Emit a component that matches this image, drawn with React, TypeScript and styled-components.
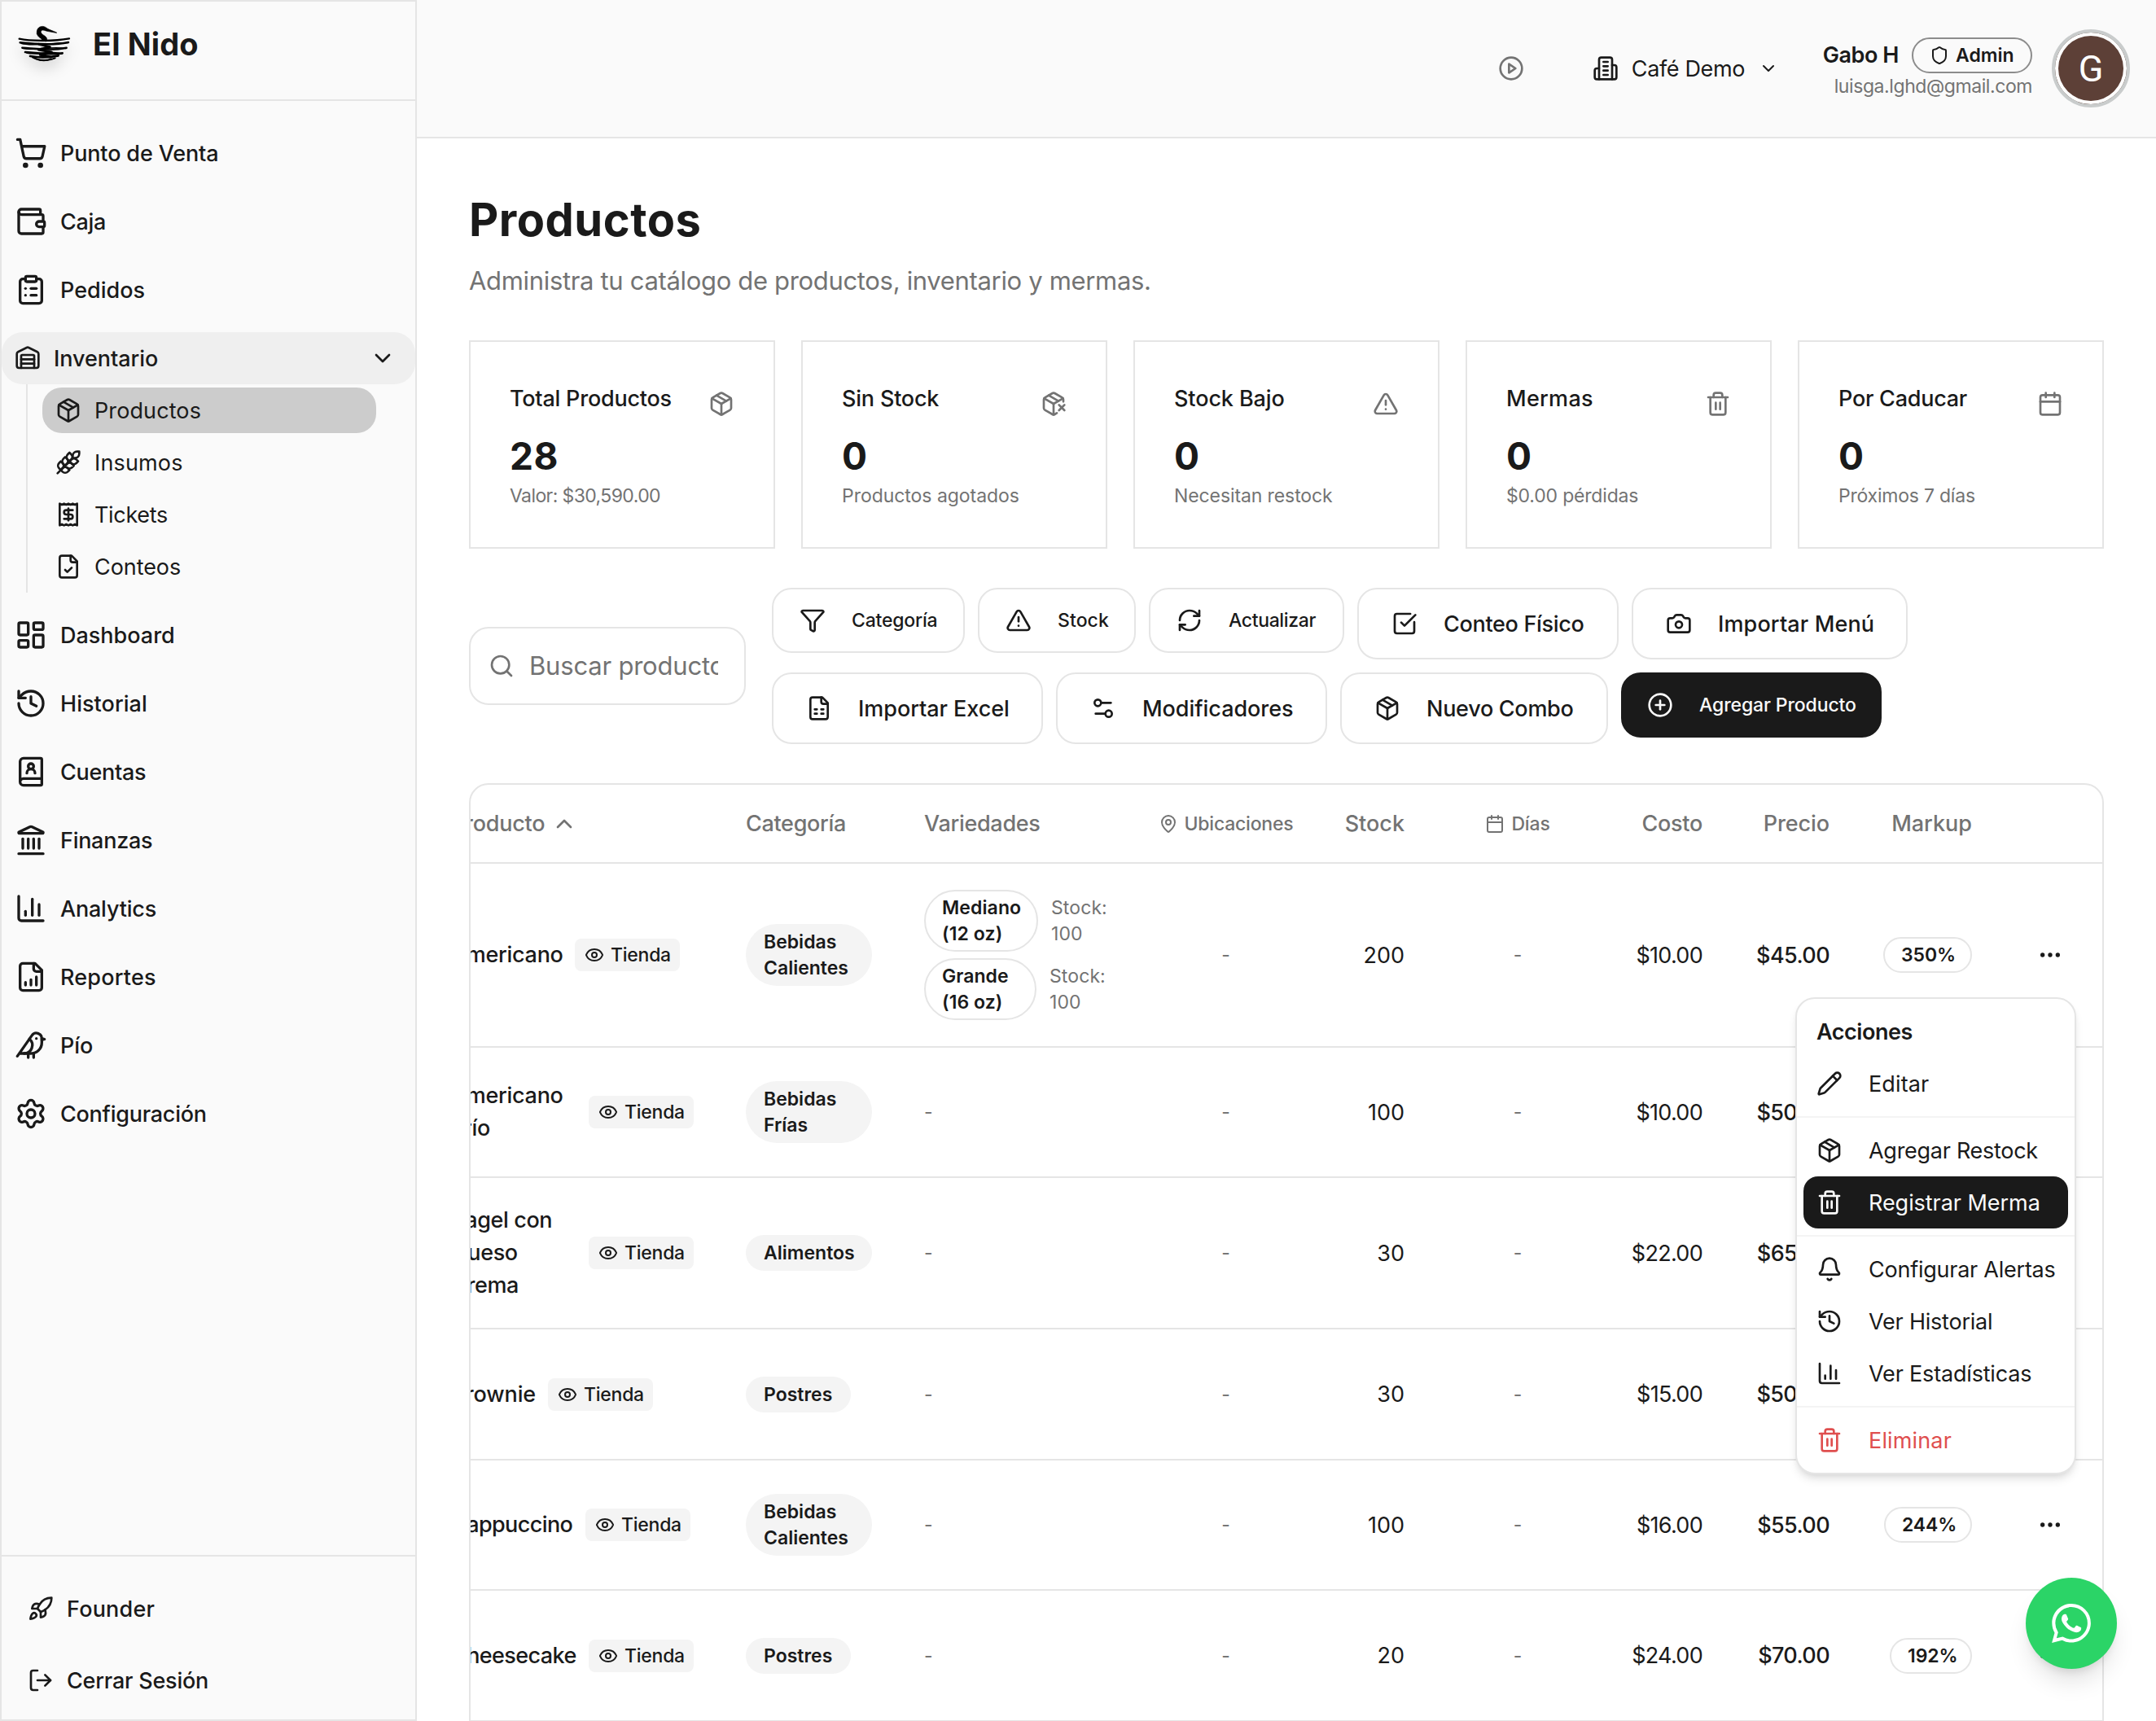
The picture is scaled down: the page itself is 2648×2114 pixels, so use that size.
import React from "react";
import styled, { createGlobalStyle, css } from "styled-components";
import {
  Bell, Bird, BookUser, Calendar, Camera, ChartColumn, ChevronDown, ChevronUp, CirclePlus, ClipboardList,
  Ellipsis, Eye, Funnel, History, Landmark, LayoutDashboard, LogOut, MapPin, Package, PackageX, Pencil,
  Receipt, RefreshCw, Rocket, Search, Settings, Settings2, Shield, ShoppingCart, SquareCheckBig, Trash2,
  TriangleAlert, Wallet, Warehouse, Wheat,
} from "lucide-react";
import { SiWhatsapp } from "react-icons/si";

const color = {
  text: "#1a1a1a",
  muted: "#737373",
  border: "#e5e5e5",
  panel: "#fafafa",
  soft: "#f4f4f4",
  danger: "#df4f4f",
};

const GlobalStyle = createGlobalStyle`
  *, *::before, *::after { box-sizing: border-box; }
  body {
    margin: 0;
    background: #fff;
    color: ${color.text};
    font-family: Inter, "Liberation Sans", sans-serif;
    font-size: 27px;
    font-kerning: normal;
  }
  svg { flex: none; display: block; }
`;

/* ---------- icons ---------- */

type IconProps = { size?: number };

const Outline = ({ size = 24, children }: IconProps & { children: React.ReactNode }) => (
  <svg width={size} height={size} viewBox="0 0 24 24" fill="none" stroke="currentColor" strokeWidth={2}
    strokeLinecap="round" strokeLinejoin="round">{children}</svg>
);

const FileSheet = ({ size, marks }: IconProps & { marks: string }) => (
  <Outline size={size}>
    <path d="M15 2H6a2 2 0 0 0-2 2v16a2 2 0 0 0 2 2h12a2 2 0 0 0 2-2V7Z" />
    <path d="M14 2v4a2 2 0 0 0 2 2h4" />
    <path d={marks} />
  </Outline>
);
const FileCheck = (p: IconProps) => <FileSheet {...p} marks="m9 15 2 2 4-4" />;
const FileChart = (p: IconProps) => <FileSheet {...p} marks="M8 18v-2M12 18v-4M16 18v-6" />;
const FileTable = (p: IconProps) => <FileSheet {...p} marks="M8 13h2M14 13h2M8 17h2M14 17h2" />;

const Building = (p: IconProps) => (
  <Outline {...p}>
    <path d="M6 22V4a2 2 0 0 1 2-2h8a2 2 0 0 1 2 2v18Z" />
    <path d="M6 12H4a2 2 0 0 0-2 2v6a2 2 0 0 0 2 2h2" />
    <path d="M18 9h2a2 2 0 0 1 2 2v9a2 2 0 0 1-2 2h-2" />
    <path d="M10 6h4M10 10h4M10 14h4M10 18h4" />
  </Outline>
);

const PlayCircle = (p: IconProps) => (
  <Outline {...p}>
    <circle cx="12" cy="12" r="10" />
    <polygon points="10 8 16 12 10 16 10 8" />
  </Outline>
);

const NestLogo = styled(({ className }: { className?: string }) => (
  <svg className={className} width="66" height="46" viewBox="61 97 198 138" fill="none" stroke="#000" strokeLinecap="round">
    <path d="M134 128C131 108 146 98 160 102C168 104 172 110 180 113L207 124C207 125 206 126 204 125L172 119C163 117 158 113 152 116C144 122 152 130 161 135C171 141 174 150 168 157L150 152C160 148 136 143 134 128Z"
      fill="#000" strokeWidth="2" />
    <path d="M69 147C110 156 200 156 253 146" strokeWidth="7" />
    <path d="M72 161C110 165 190 173 250 160" strokeWidth="7.5" />
    <path d="M76 164C120 177 190 160 248 162" strokeWidth="4" />
    <path d="M80 180C120 182 180 193 243 180" strokeWidth="7.5" />
    <path d="M84 183C130 192 190 172 241 183" strokeWidth="4" />
    <path d="M91 196C130 199 180 208 228 200" strokeWidth="8" />
    <path d="M96 199C140 210 190 186 226 202" strokeWidth="4" />
    <path d="M109 211C140 216 180 216 213 209" strokeWidth="8" />
    <path d="M118 215C140 228 176 230 201 218" strokeWidth="6" />
    <path d="M132 221C150 230 170 229 188 221" strokeWidth="5" />
    <path d="M142 167L182 177L140 187L188 196L146 206L184 214" strokeWidth="9" strokeLinejoin="round" />
  </svg>
))`
  filter: drop-shadow(0 10px 8px rgba(0, 0, 0, 0.14));
`;

/* ---------- text ---------- */

const Text = styled.span<{ $track?: number; $size?: number; $weight?: number; $muted?: boolean }>`
  letter-spacing: ${(p) => p.$track ?? -0.15}px;
  font-size: ${(p) => p.$size ?? 27}px;
  font-weight: ${(p) => p.$weight ?? 500};
  white-space: nowrap;
  ${(p) => p.$muted && css`color: ${color.muted};`}
`;

/* ---------- shell ---------- */

const Page = styled.div`
  position: relative;
  display: flex;
  width: 2648px;
  height: 2114px;
  overflow: hidden;
`;

const Sidebar = styled.aside`
  display: flex;
  flex-direction: column;
  width: 512px;
  height: 2114px;
  flex: none;
  background: ${color.panel};
  border: 2px solid ${color.border};
`;

const Brand = styled.div`
  display: flex;
  align-items: center;
  gap: 27px;
  height: 122px;
  padding: 0 18px 16px 19px;
  border-bottom: 2px solid ${color.border};
`;

const Nav = styled.nav`
  display: flex;
  flex-direction: column;
  flex: 1;
  gap: 20px;
  padding-top: 32px;
`;

const NavItem = styled.a`
  display: flex;
  align-items: center;
  gap: 16px;
  height: 64px;
  padding-left: 16px;
`;

const NavGroupHead = styled(NavItem)`
  background: #efefef;
  border-radius: 26px;
  padding-right: 24px;
  & > svg:last-child { margin-left: auto; }
`;

const SubList = styled.div`
  display: flex;
  flex-direction: column;
  gap: 8px;
  margin-left: 30px;
  padding: 4px 48px 4px 18px;
  border-left: 2px solid ${color.border};
`;

const SubItem = styled.a<{ $active?: boolean }>`
  display: flex;
  align-items: center;
  gap: 16px;
  height: 56px;
  padding-left: 16px;
  border-radius: 24px;
  background: ${(p) => (p.$active ? "#cccccc" : "transparent")};
`;

const SideFooter = styled.div`
  display: flex;
  flex-direction: column;
  gap: 24px;
  padding: 32px 0 16px 16px;
  border-top: 2px solid ${color.border};
`;

const Column = styled.div`
  display: flex;
  flex-direction: column;
  flex: 1;
  min-width: 0;
`;

const TopBar = styled.header`
  display: flex;
  align-items: center;
  justify-content: flex-end;
  height: 170px;
  flex: none;
  padding-right: 32px;
  background: ${color.panel};
  border-bottom: 2px solid ${color.border};
`;

const TourButton = styled.span`
  color: ${color.muted};
  margin-right: 84px;
`;

const Tenant = styled.div`
  display: flex;
  align-items: center;
  gap: 16px;
  width: 228px;
  margin-right: 55px;
  & > svg:last-child { margin-left: auto; }
`;

const UserBlock = styled.div`
  display: flex;
  flex-direction: column;
  align-items: flex-end;
  margin-right: 24px;
  padding-bottom: 1px;
`;

const UserRow = styled.div`
  display: flex;
  align-items: center;
  gap: 16px;
`;

const RoleBadge = styled.span`
  display: flex;
  align-items: center;
  gap: 8px;
  width: 148px;
  height: 44px;
  padding-left: 20px;
  border: 2px solid #8c8c8c;
  border-radius: 22px;
`;

const Email = styled(Text)`
  line-height: 32px;
`;

const Avatar = styled.div`
  display: flex;
  align-items: center;
  justify-content: center;
  width: 96px;
  height: 96px;
  border-radius: 50%;
  border: 4px solid #c9cccc;
  background: #5d4037;
  box-shadow: inset 0 0 0 4px #fff;
  color: #fff;
  font-family: Roboto, sans-serif;
  font-size: 45px;
`;

const Main = styled.main`
  display: flex;
  flex-direction: column;
  padding: 68px 64px 0;
`;

const Title = styled.h1`
  margin: 0;
  font-size: 56px;
  line-height: 64px;
  font-weight: 700;
  letter-spacing: 0.5px;
`;

const Subtitle = styled.p`
  margin: 27px 0 0;
  font-size: 31px;
  line-height: 32px;
  letter-spacing: -0.33px;
  color: ${color.muted};
`;

/* ---------- stat cards ---------- */

const Cards = styled.section`
  display: grid;
  grid-template-columns: repeat(5, 1fr);
  gap: 32px;
  margin-top: 57px;
`;

const Card = styled.article`
  height: 256px;
  padding: 48px;
  border: 2px solid ${color.border};
`;

const CardHead = styled.div`
  display: flex;
  justify-content: space-between;
  align-items: flex-end;
  height: 44px;
  line-height: 44px;
  & > svg { color: ${color.muted}; }
`;

const CardValue = styled.div`
  margin-top: 24px;
  font-size: 46px;
  line-height: 48px;
  font-weight: 700;
  letter-spacing: 0.6px;
`;

const CardNote = styled.div`
  margin-top: 8px;
  line-height: 32px;
`;

/* ---------- toolbar ---------- */

const Toolbar = styled.section`
  display: flex;
  align-items: center;
  gap: 32px;
  margin-top: 48px;
`;

const SearchBox = styled.div`
  display: flex;
  align-items: center;
  gap: 18px;
  width: 340px;
  height: 96px;
  flex: none;
  padding: 0 32px 0 22px;
  border: 2px solid ${color.border};
  border-radius: 24px;
  color: ${color.muted};
`;

const SearchHint = styled(Text)`
  flex: 1;
  min-width: 0;
  overflow: hidden;
  line-height: 44px;
`;

const Actions = styled.div`
  display: flex;
  flex-direction: column;
  gap: 16px;
`;

const ActionRow = styled.div`
  display: flex;
  align-items: flex-start;
  gap: 16px;
`;

const Button = styled.button<{ $w: number; $large?: boolean; $primary?: boolean }>`
  display: flex;
  align-items: center;
  gap: 32px;
  width: ${(p) => p.$w}px;
  height: ${(p) => (p.$large ? 88 : 80)}px;
  padding: 0 0 0 ${(p) => (p.$large ? 40 : p.$primary ? 30 : 32)}px;
  border: 2px solid ${(p) => (p.$primary ? color.text : color.border)};
  border-radius: 24px;
  background: ${(p) => (p.$primary ? color.text : "#fff")};
  color: ${(p) => (p.$primary ? color.panel : color.text)};
  font-family: inherit;
`;

/* ---------- table ---------- */

const TableFrame = styled.section`
  height: 1200px;
  margin-top: 48px;
  overflow: hidden;
  border: 2px solid ${color.border};
  border-radius: 24px;
`;

const TableBody = styled.div`
  width: 2060px;
  margin-left: -56px;
`;

const Row = styled.div<{ $h: number }>`
  display: grid;
  grid-template-columns: 362px 219px 288px 229px 137px 214px 152px 156px 175px 128px;
  height: ${(p) => p.$h}px;
  border-bottom: 2px solid ${color.border};
`;

const Cell = styled.div<{ $align?: "center" | "flex-end" }>`
  display: flex;
  align-items: center;
  justify-content: ${(p) => p.$align ?? "flex-start"};
  padding: 0 32px;
  min-width: 0;
`;

const HeadCell = styled(Cell)`
  gap: 8px;
  color: ${color.muted};
`;

const ProductCell = styled(Cell)`
  gap: 16px;
`;

const ProductName = styled(Text)<{ $w: number }>`
  width: ${(p) => p.$w}px;
  flex: none;
  line-height: 40px;
  white-space: pre-line;
`;

const StoreTag = styled.span`
  display: flex;
  align-items: center;
  gap: 8px;
  width: 129px;
  height: 40px;
  padding-left: 12px;
  border-radius: 8px;
  background: ${color.soft};
`;

const Pill = styled.span<{ $w?: number; $lined?: boolean }>`
  display: flex;
  width: ${(p) => (p.$w ? `${p.$w}px` : "auto")};
  padding: ${(p) => (p.$lined ? "4px 0 4px 20px" : "6px 0 6px 22px")};
  border: ${(p) => (p.$lined ? `2px solid ${color.border}` : "none")};
  border-radius: 38px;
  background: ${(p) => (p.$lined ? "#fff" : color.soft)};
  line-height: 32px;
  & > * { white-space: pre-line; }
`;

const Varieties = styled.div`
  display: flex;
  flex-direction: column;
  gap: 8px;
`;

const Variety = styled.div`
  display: flex;
  align-items: center;
  gap: 16px;
  line-height: 32px;
`;

const StockNote = styled(Text)`
  white-space: pre-line;
`;

/* ---------- row menu ---------- */

const Menu = styled.div`
  position: absolute;
  left: 2205px;
  top: 1225px;
  width: 345px;
  padding: 8px 0;
  border: 2px solid ${color.border};
  border-radius: 24px;
  background: #fff;
  box-shadow: 0 8px 12px -2px rgba(0, 0, 0, 0.1), 0 4px 8px -4px rgba(0, 0, 0, 0.1);
`;

const MenuLabel = styled.div`
  display: flex;
  align-items: center;
  height: 64px;
  padding-left: 24px;
`;

const MenuItem = styled.div<{ $active?: boolean; $danger?: boolean }>`
  display: flex;
  align-items: center;
  gap: 32px;
  height: 64px;
  margin: 0 8px;
  padding-left: 16px;
  border-radius: 18px;
  background: ${(p) => (p.$active ? color.text : "transparent")};
  color: ${(p) => (p.$active ? color.panel : p.$danger ? color.danger : color.text)};
`;

const MenuRule = styled.div`
  height: 2px;
  margin: 8px 0;
  background: ${color.soft};
`;

const ChatButton = styled.a`
  position: absolute;
  left: 2488px;
  top: 1938px;
  display: flex;
  align-items: center;
  justify-content: center;
  width: 112px;
  height: 112px;
  border-radius: 50%;
  background: #2bd467;
  color: #fff;
  box-shadow: 0 20px 30px -6px rgba(0, 0, 0, 0.12), 0 8px 12px -6px rgba(0, 0, 0, 0.12);
`;

/* ---------- data ---------- */

type Icon = React.ComponentType<{ size?: number }>;

const navTop: [Icon, string, number][] = [
  [ShoppingCart, "Punto de Venta", -0.15],
  [Wallet, "Caja", -0.31],
  [ClipboardList, "Pedidos", 0],
];
const navSub: [Icon, string, number][] = [
  [Package, "Productos", 0.1],
  [Wheat, "Insumos", 0.15],
  [Receipt, "Tickets", -0.32],
  [FileCheck, "Conteos", -0.06],
];
const navRest: [Icon, string, number][] = [
  [LayoutDashboard, "Dashboard", 0],
  [History, "Historial", 0.05],
  [BookUser, "Cuentas", -0.3],
  [Landmark, "Finanzas", -0.28],
  [ChartColumn, "Analytics", -0.2],
  [FileChart, "Reportes", 0.19],
  [Bird, "Pío", -0.06],
  [Settings, "Configuración", -0.25],
];

const stats: { title: string; track: number; value: string; note: string; noteTrack: number; icon: Icon }[] = [
  { title: "Total Productos", track: -0.23, value: "28", note: "Valor: $30,590.00", noteTrack: -0.6, icon: Package },
  { title: "Sin Stock", track: -0.2, value: "0", note: "Productos agotados", noteTrack: -0.04, icon: PackageX },
  { title: "Stock Bajo", track: -0.1, value: "0", note: "Necesitan restock", noteTrack: -0.1, icon: TriangleAlert },
  { title: "Mermas", track: 0.28, value: "0", note: "$0.00 pérdidas", noteTrack: -0.18, icon: Trash2 },
  { title: "Por Caducar", track: -0.25, value: "0", note: "Próximos 7 días", noteTrack: -0.22, icon: Calendar },
];

type Action = { label: string; icon: Icon; w: number; track: number; large?: boolean; primary?: boolean };
const actionRows: Action[][] = [
  [
    { label: "Categoría", icon: Funnel, w: 237, track: -0.2 },
    { label: "Stock", icon: TriangleAlert, w: 194, track: 0.09 },
    { label: "Actualizar", icon: RefreshCw, w: 240, track: -0.36 },
    { label: "Conteo Físico", icon: SquareCheckBig, w: 321, track: -0.32, large: true },
    { label: "Importar Menú", icon: Camera, w: 339, track: 0.13, large: true },
  ],
  [
    { label: "Importar Excel", icon: FileTable, w: 333, track: -0.05, large: true },
    { label: "Modificadores", icon: Settings2, w: 333, track: -0.04, large: true },
    { label: "Nuevo Combo", icon: Package, w: 329, track: -0.28, large: true },
    { label: "Agregar Producto", icon: CirclePlus, w: 320, track: -0.11, primary: true },
  ],
];

type Product = {
  h: number; name: string; nameW: number; track: number; category: string; catW: number;
  varieties?: [string, number, number][]; stock: string; cost: string; price: string;
  markup: string; markupW: number;
};
const products: Product[] = [
  { h: 226, name: "Americano", nameW: 136, track: -0.3, category: "Bebidas\nCalientes", catW: 155,
    varieties: [["Mediano\n(12 oz)", 140, 0.1], ["Grande\n(16 oz)", 138, 0.05]],
    stock: "200", cost: "$10.00", price: "$45.00", markup: "350%", markupW: 109 },
  { h: 160, name: "Americano\nFrío", nameW: 153, track: -0.3, category: "Bebidas\nFrías", catW: 155,
    stock: "100", cost: "$10.00", price: "$50.00", markup: "400%", markupW: 110 },
  { h: 186, name: "Bagel con\nQueso\nCrema", nameW: 153, track: -0.4, category: "Alimentos", catW: 155,
    stock: "30", cost: "$22.00", price: "$65.00", markup: "195%", markupW: 104 },
  { h: 161, name: "Brownie", nameW: 103, track: -0.1, category: "Postres", catW: 129,
    stock: "30", cost: "$15.00", price: "$50.00", markup: "233%", markupW: 107 },
  { h: 160, name: "Cappuccino", nameW: 149, track: -0.6, category: "Bebidas\nCalientes", catW: 155,
    stock: "100", cost: "$16.00", price: "$55.00", markup: "244%", markupW: 108 },
  { h: 161, name: "Cheesecake", nameW: 153, track: -0.6, category: "Postres", catW: 129,
    stock: "20", cost: "$24.00", price: "$70.00", markup: "192%", markupW: 101 },
];

type Entry = { label: string; icon: Icon; track: number; active?: boolean; danger?: boolean };
const menuGroups: Entry[][] = [
  [{ label: "Editar", icon: Pencil, track: 0.11 }],
  [
    { label: "Agregar Restock", icon: Package, track: -0.28 },
    { label: "Registrar Merma", icon: Trash2, track: -0.05, active: true },
  ],
  [
    { label: "Configurar Alertas", icon: Bell, track: -0.24 },
    { label: "Ver Historial", icon: History, track: -0.22 },
    { label: "Ver Estadísticas", icon: ChartColumn, track: -0.18 },
  ],
  [{ label: "Eliminar", icon: Trash2, track: 0.15, danger: true }],
];

/* ---------- parts ---------- */

const NavLinks = ({ items }: { items: [Icon, string, number][] }) => (
  <>
    {items.map(([I, label, track]) => (
      <NavItem key={label}><I size={40} /><Text $track={track}>{label}</Text></NavItem>
    ))}
  </>
);

const Dash = () => <Text $size={23} $weight={400} $muted>-</Text>;

const ProductRow = ({ p }: { p: Product }) => (
  <Row $h={p.h}>
    <ProductCell>
      <ProductName $w={p.nameW} $track={p.track}>{p.name}</ProductName>
      <StoreTag><Eye size={24} /><Text $size={23} $track={-0.25}>Tienda</Text></StoreTag>
    </ProductCell>
    <Cell><Pill $w={p.catW}><Text $size={23} $weight={600} $track={0}>{p.category}</Text></Pill></Cell>
    <Cell>
      {p.varieties ? (
        <Varieties>
          {p.varieties.map(([label, w, track]) => (
            <Variety key={label}>
              <Pill $lined $w={w}><Text $size={23} $weight={600} $track={track}>{label}</Text></Pill>
              <StockNote $size={23} $weight={400} $track={0.1} $muted>{"Stock:\n100"}</StockNote>
            </Variety>
          ))}
        </Varieties>
      ) : <Dash />}
    </Cell>
    <Cell $align="center"><Dash /></Cell>
    <Cell $align="flex-end"><Text $weight={400} $track={0}>{p.stock}</Text></Cell>
    <Cell $align="center"><Dash /></Cell>
    <Cell $align="flex-end"><Text $weight={400} $track={-0.7}>{p.cost}</Text></Cell>
    <Cell $align="flex-end"><Text $weight={500} $track={-0.6}>{p.price}</Text></Cell>
    <Cell $align="flex-end"><Pill $lined $w={p.markupW}><Text $size={23} $weight={600} $track={-0.1}>{p.markup}</Text></Pill></Cell>
    <Cell $align="center"><Ellipsis size={32} /></Cell>
  </Row>
);

export default function App() {
  return (
    <Page>
      <GlobalStyle />
      <Sidebar>
        <Brand><NestLogo /><Text $size={38} $weight={700} $track={0.1}>El Nido</Text></Brand>
        <Nav>
          <NavLinks items={navTop} />
          <div>
            <NavGroupHead><Warehouse size={32} /><Text $track={-0.05}>Inventario</Text><ChevronDown size={32} /></NavGroupHead>
            <SubList>
              {navSub.map(([I, label, track], i) => (
                <SubItem key={label} $active={i === 0}><I size={32} /><Text $weight={400} $track={track}>{label}</Text></SubItem>
              ))}
            </SubList>
          </div>
          <NavLinks items={navRest} />
        </Nav>
        <SideFooter>
          <NavItem><Rocket size={32} /><Text $track={0.2}>Founder</Text></NavItem>
          <NavItem><LogOut size={32} /><Text $track={-0.22}>Cerrar Sesión</Text></NavItem>
        </SideFooter>
      </Sidebar>

      <Column>
        <TopBar>
          <TourButton><PlayCircle size={32} /></TourButton>
          <Tenant><Building size={32} /><Text $weight={400} $track={-0.35}>Café Demo</Text><ChevronDown size={24} /></Tenant>
          <UserBlock>
            <UserRow>
              <Text $weight={600} $track={-0.46}>Gabo H</Text>
              <RoleBadge><Shield size={24} /><Text $size={23} $weight={600} $track={0}>Admin</Text></RoleBadge>
            </UserRow>
            <Email $size={23} $weight={400} $track={-0.42} $muted>luisga.lghd@gmail.com</Email>
          </UserBlock>
          <Avatar>G</Avatar>
        </TopBar>

        <Main>
          <Title>Productos</Title>
          <Subtitle>Administra tu catálogo de productos, inventario y mermas.</Subtitle>

          <Cards>
            {stats.map((s) => (
              <Card key={s.title}>
                <CardHead><Text $track={s.track}>{s.title}</Text><s.icon size={32} /></CardHead>
                <CardValue>{s.value}</CardValue>
                <CardNote><Text $size={23} $weight={400} $track={s.noteTrack} $muted>{s.note}</Text></CardNote>
              </Card>
            ))}
          </Cards>

          <Toolbar>
            <SearchBox><Search size={32} /><SearchHint $size={31} $weight={400} $track={-0.2}>Buscar productos...</SearchHint></SearchBox>
            <Actions>
              {actionRows.map((row, i) => (
                <ActionRow key={i}>
                  {row.map((a) => (
                    <Button key={a.label} $w={a.w} $large={a.large} $primary={a.primary}>
                      <a.icon size={32} />
                      <Text $size={a.large ? 27 : 23} $track={a.track}>{a.label}</Text>
                    </Button>
                  ))}
                </ActionRow>
              ))}
            </Actions>
          </Toolbar>

          <TableFrame>
            <TableBody>
              <Row $h={97}>
                <HeadCell><Text $track={-0.25}>Producto</Text><ChevronUp size={32} /></HeadCell>
                <HeadCell><Text $track={-0.32}>Categoría</Text></HeadCell>
                <HeadCell><Text $track={-0.3}>Variedades</Text></HeadCell>
                <HeadCell $align="center"><MapPin size={24} /><Text $size={23} $track={-0.22}>Ubicaciones</Text></HeadCell>
                <HeadCell $align="flex-end"><Text $track={0}>Stock</Text></HeadCell>
                <HeadCell $align="center"><Calendar size={24} /><Text $size={23} $track={-0.15}>Días</Text></HeadCell>
                <HeadCell $align="flex-end"><Text $track={-0.27}>Costo</Text></HeadCell>
                <HeadCell $align="flex-end"><Text $track={-0.1}>Precio</Text></HeadCell>
                <HeadCell $align="flex-end"><Text $track={0}>Markup</Text></HeadCell>
                <HeadCell />
              </Row>
              {products.map((p) => <ProductRow key={p.name} p={p} />)}
            </TableBody>
          </TableFrame>
        </Main>
      </Column>

      <Menu>
        <MenuLabel><Text $weight={600} $track={-0.45}>Acciones</Text></MenuLabel>
        {menuGroups.map((group, i) => (
          <React.Fragment key={i}>
            {i > 0 && <MenuRule />}
            {group.map((e) => (
              <MenuItem key={e.label} $active={e.active} $danger={e.danger}>
                <e.icon size={32} /><Text $weight={400} $track={e.track}>{e.label}</Text>
              </MenuItem>
            ))}
          </React.Fragment>
        ))}
      </Menu>
      <ChatButton><SiWhatsapp size={48} /></ChatButton>
    </Page>
  );
}
